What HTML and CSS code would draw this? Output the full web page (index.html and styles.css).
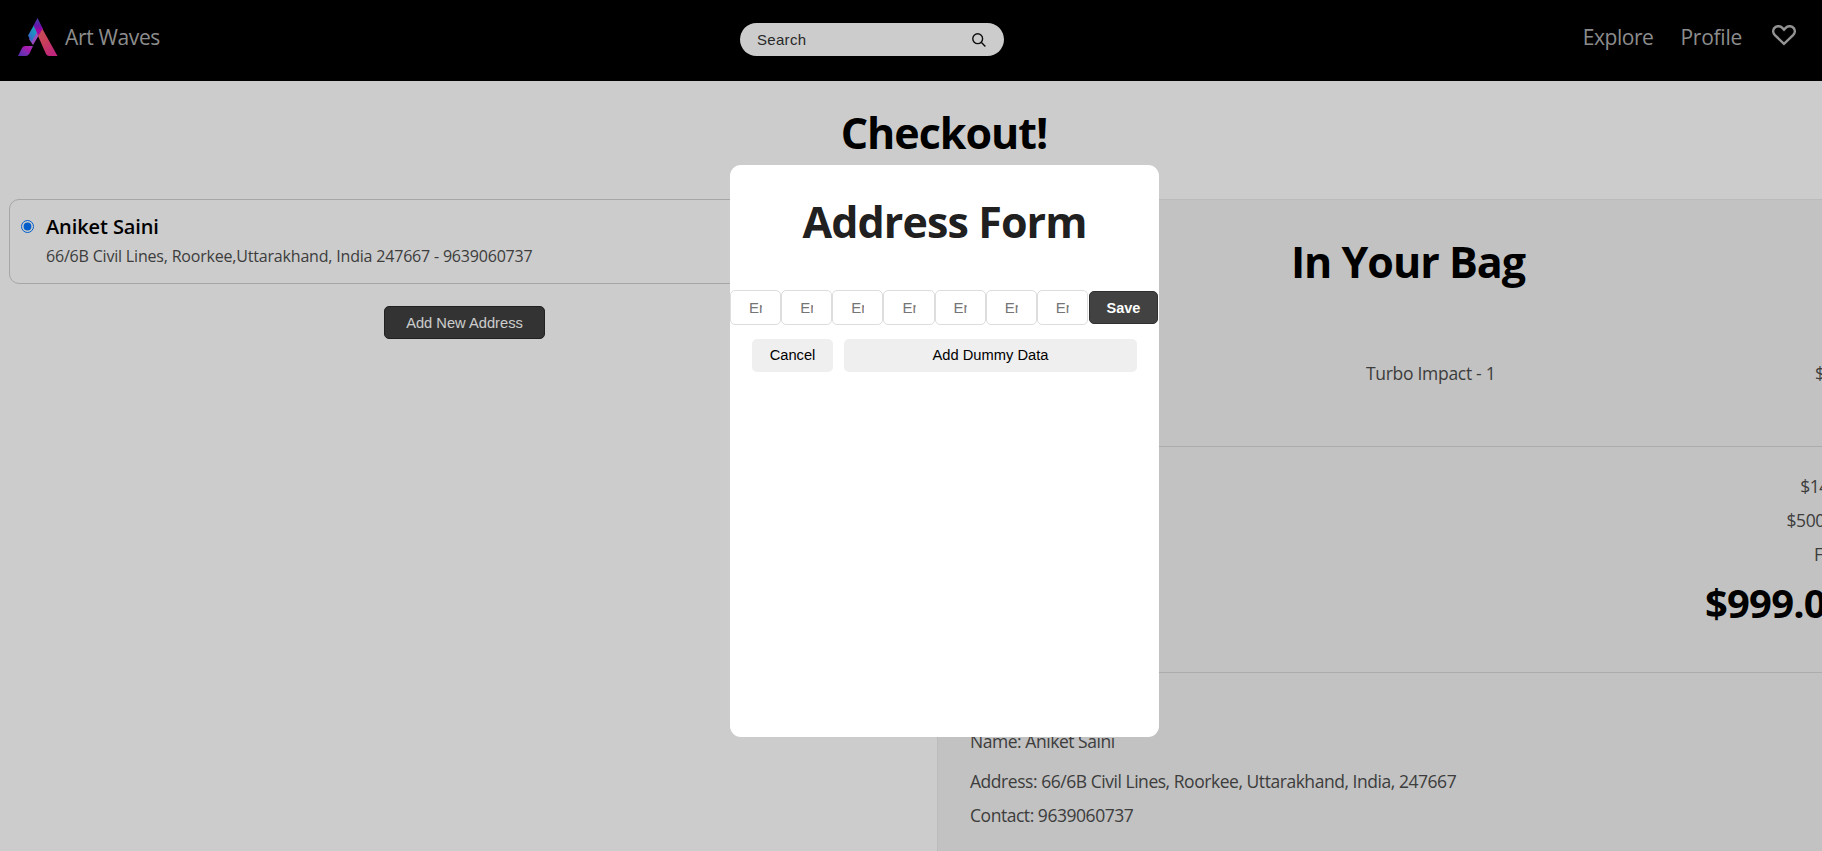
FILE: index.html
```html
<!DOCTYPE html>
<html lang="en">
<head>
<meta charset="utf-8">
<title>Art Waves</title>
<link rel="stylesheet" href="styles.css">
</head>
<body>
<header class="nav">
  <div class="brand">
    <svg class="logo" width="40" height="38" viewBox="0 0 40 38">
      <defs>
        <linearGradient id="leg" x1="0" y1="0" x2="0.6" y2="1"><stop offset="0" stop-color="#f5646e"/><stop offset="0.5" stop-color="#fa5070"/><stop offset="1" stop-color="#f0309c"/></linearGradient>
        <linearGradient id="foot" x1="0" y1="1" x2="1" y2="0"><stop offset="0" stop-color="#6238d8"/><stop offset="0.4" stop-color="#9a3ae0"/><stop offset="0.7" stop-color="#d81fd8"/><stop offset="1" stop-color="#c04fe8"/></linearGradient>
        <linearGradient id="tip" x1="0" y1="0" x2="0" y2="1"><stop offset="0" stop-color="#5a50d8"/><stop offset="0.4" stop-color="#7a20d8"/><stop offset="0.7" stop-color="#d000c8"/><stop offset="1" stop-color="#d000c8"/></linearGradient>
        <linearGradient id="wing" x1="1" y1="0" x2="0" y2="1"><stop offset="0" stop-color="#10e8e8"/><stop offset="1" stop-color="#4a6aff"/></linearGradient>
      </defs>
      <path fill="#c060ee" d="M19 12 21 17 15 27 11 21z"/>
      <path fill="url(#wing)" d="M16 7 19.500 13 13.500 24 10 17.500z"/>
      <path fill="url(#tip)" d="M19.500 0 25 11 20.500 18 15.500 7.500z"/>
      <path fill="url(#leg)" d="M24.500 11 39.500 38H31Q29 38 28 36L20 18z"/>
      <path fill="url(#foot)" d="M0 38 4 30Q5 28 7.500 28H15L11.500 35.500Q10 38 7.500 38z"/>
    </svg>
    <span class="brand-name">Art Waves</span>
  </div>
  <div class="search">
    <span class="search-text">Search</span>
    <svg width="14" height="14" viewBox="0 0 14 14" fill="none" stroke="#111" stroke-width="1.400"><circle cx="5.700" cy="5.700" r="4.900"/><path d="M9.200 9.200 13.400 13.400"/></svg>
  </div>
  <nav class="links">
    <a class="link explore">Explore</a>
    <a class="link profile">Profile</a>
    <svg class="heart" width="24" height="21" viewBox="0 0 24 21" fill="none" stroke="#b8b8b8" stroke-width="2.500"><path d="M12 18.800 2.900 10.200C.800 8.100.700 5 2.500 2.900 4.600.700 8.200.700 10.300 2.800L12 4.600 13.700 2.800C15.800.700 19.400.700 21.500 2.900 23.300 5 23.200 8.100 21.100 10.200z"/></svg>
  </nav>
</header>
<main class="page">
  <h1 class="title checkout">Checkout!</h1>
  <div class="columns">
    <section class="addresses">
      <label class="card">
        <input type="radio" class="radio" checked>
        <span class="card-body">
          <span class="card-name">Aniket Saini</span>
          <span class="card-address">66/6B Civil Lines, Roorkee,Uttarakhand, India 247667 - 9639060737</span>
        </span>
      </label>
      <button class="btn dark">Add New Address</button>
    </section>
    <section class="bag">
      <h1 class="title bag-title">In Your Bag</h1>
      <div class="item"><span class="item-name">Turbo Impact - 1</span><span class="item-price">$</span></div>
      <div class="totals">
        <span>$1499</span>
        <span>$500.00</span>
        <span>Free</span>
        <strong class="total">$999.00</strong>
      </div>
      <div class="delivery">
        <span class="d-name">Name: Aniket Saini</span>
        <span class="d-address">Address: 66/6B Civil Lines, Roorkee, Uttarakhand, India, 247667</span>
        <span class="d-contact">Contact: 9639060737</span>
      </div>
    </section>
  </div>
</main>
<div class="overlay">
  <div class="modal">
    <h1 class="title form-title">Address Form</h1>
    <form class="fields">
      <input class="field" placeholder="Enter name"><input class="field" placeholder="Enter street"><input class="field" placeholder="Enter city"><input class="field" placeholder="Enter state"><input class="field" placeholder="Enter country"><input class="field" placeholder="Enter pincode"><input class="field" placeholder="Enter mobile">
      <button type="button" class="save">Save</button>
    </form>
    <div class="actions">
      <button class="btn light">Cancel</button>
      <button class="btn light wide">Add Dummy Data</button>
    </div>
  </div>
</div>
</body>
</html>
```
FILE: styles.css
```css
* { box-sizing: border-box; }
body { margin: 0; height: 851px; overflow: hidden; background: #fff; color: #4d4d4d; font-family: "Open Sans", sans-serif; font-size: 17.5px; }
.nav { height: 81px; background: #000; display: grid; grid-template-columns: 740px 264px 1fr; }
.brand { display: flex; padding: 18px 0 0 18px; gap: 7px; }
.brand-name, .link { font-size: 21px; line-height: 40px; color: #b0b0b0; letter-spacing: -.35px; }
.brand-name { margin-top: -1px; }
.search { margin-top: 23px; height: 33px; border-radius: 17px; background: #fff; display: flex; align-items: center; justify-content: space-between; padding: 0 18px 0 17px; font: 15px "Liberation Sans", sans-serif; letter-spacing: .3px; color: #333; }
.links { display: flex; padding: 17px 26px 0 0; justify-content: flex-end; }
.explore { letter-spacing: -.45px; }
.profile { margin: 0 30px 0 27px; letter-spacing: -.25px; }
.heart { margin-top: 8px; }
.title { margin: 0; font-size: 43px; line-height: 60px; font-weight: 700; text-align: center; color: #000; letter-spacing: -1px; }
.checkout { margin: 22px 0 36px; padding-left: 66px; }
.columns { display: grid; grid-template-columns: 911px 944px; gap: 17px; padding-left: 9px; }
.addresses { display: flex; flex-direction: column; align-items: center; gap: 22px; }
.card { width: 100%; height: 85px; border: 1px solid #d0d0d0; border-radius: 10px; display: flex; padding: 13px 11px; }
.radio { margin: 7px 12px 0 0; width: 13px; height: 13px; accent-color: #0075ff; }
.card-body { display: flex; flex-direction: column; }
.card-name { font-size: 20px; line-height: 27px; font-weight: 600; color: #000; letter-spacing: -.1px; }
.card-address { font-size: 16px; line-height: 32px; letter-spacing: -.19px; }
.btn { height: 33px; border: 0; border-radius: 5px; font: 14.7px "Liberation Sans", sans-serif; }
.dark { width: 161px; background: #404040; border: 1px solid #2a2a2a; color: #fff; }
.bag { height: 652px; background: #f3f3f3; border: 1px solid #eaeaea; border-bottom: 0; letter-spacing: -.46px; }
.bag-title { margin-top: 32px; padding-right: 2px; }
.item { height: 155px; padding: 64px 32px 0 428px; display: flex; border-bottom: 1px solid #d8d8d8; line-height: 34px; letter-spacing: -.3px; }
.item-name { width: 449px; }
.totals { height: 226px; padding: 22px 32px 0 0; display: flex; flex-direction: column; align-items: flex-end; line-height: 34px; border-bottom: 1px solid #d8d8d8; }
.total { font-size: 40px; line-height: 54px; margin-top: 5px; color: #000; letter-spacing: -.8px; }
.delivery { display: flex; flex-direction: column; padding: 51px 32px 0; line-height: 34px; }
.d-address { margin-top: 6px; }
.overlay { position: fixed; inset: 0; background: rgba(0, 0, 0, .2); padding: 165px 0 0 730px; }
.modal { width: 429px; height: 572px; background: #fff; border-radius: 11px; padding-top: 27px; }
.form-title { color: #202020; letter-spacing: -.9px; }
.fields { display: flex; margin: 38px 1px 0 0; align-items: center; }
.field { flex: 1; min-width: 0; width: 0; height: 35px; border: 1px solid #ddd; border-radius: 5px; padding: 0 18px; font: 15px "Liberation Sans", sans-serif; outline: 0; }
.save { width: 69px; height: 33px; margin-left: 1px; border: 1px solid #303030; border-radius: 5px; background: #424242; color: #fff; font: bold 14.5px "Liberation Sans", sans-serif; }
.actions { display: flex; gap: 11px; padding: 14px 22px 0; }
.light { width: 81px; background: #efefef; color: #000; padding-bottom: 3px; }
.wide { flex: 1; }
```
